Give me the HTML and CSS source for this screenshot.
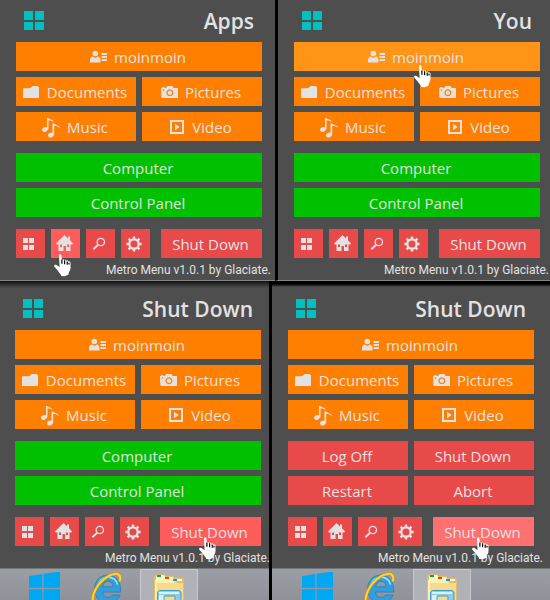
FILE: index.html
```html
<!DOCTYPE html>
<html lang="en">
<head>
<meta charset="UTF-8">
<meta name="viewport" content="width=device-width, initial-scale=1.0">
<title>Metro Menu</title>
<link rel="stylesheet" href="styles.css">
</head>
<body>

<!-- Shared icons -->
<svg class="sprite" aria-hidden="true">
    <symbol id="tiles" viewBox="0 0 20 20">
        <path d="M0 0h9v9H0zM11 0h9v9h-9zM0 11h9v8H0zM11 11h9v8h-9z"/>
    </symbol>
    <symbol id="small-tiles" viewBox="0 0 16 16">
        <path d="M2 2h5v5H2zM8 2h5v5H8zM2 9h5v5H2zM8 9h5v5H8z"/>
    </symbol>
    <symbol id="user" viewBox="0 0 17 18">
        <circle cx="5.300" cy="4.500" r="2.800"/>
        <path d="M0 13.500v-2.500c0-2 1.400-3.300 3-3.500l2.300 1.500 2.300-1.500c1.700.2 2.900 1.500 2.900 3.500v2.500z"/>
        <path d="M11.500 4H17v2h-5.500zM11.500 7H17v2h-5.500zM11.500 10H17v2h-5.500z"/>
    </symbol>
    <symbol id="folder" viewBox="0 0 17 18">
        <path d="M0 4.200h7.200l2.600-2.300h4.900l1.300 1.600v10.600H0z"/>
    </symbol>
    <symbol id="camera" viewBox="0 0 17 18">
        <path fill-rule="evenodd" d="M0 4h1V3h2.500v1H5l1.200-2h5.300l1.200 2H17v10H1.300L.3 13zM8.900 5.300a3.500 3.500 0 1 0 .01 0zM8.900 6.600a2.200 2.200 0 1 1-.01 0zM1.800 5.500v1.300h1.300V5.500z"/>
    </symbol>
    <symbol id="music" viewBox="0 0 18 20">
        <ellipse cx="2.900" cy="11.500" rx="2.900" ry="2.300" transform="rotate(-20 2.900 11.500)"/>
        <path d="M5 0h1.300c.5 1.300 4.700 1.300 5.500 3.700C9.800 2.600 8 2.300 6.500 2.500v8.800H5z"/>
        <ellipse cx="9" cy="17" rx="3" ry="2.400" transform="rotate(-20 9 17)"/>
        <path d="M10.500 5.500H12c.7 1.400 5.300 1.500 6 4.500-2.300-1.800-4.100-2.100-5.800-1.900v9h-1.700z"/>
    </symbol>
    <symbol id="video" viewBox="0 0 15 18">
        <path fill-rule="evenodd" d="M0 1h14v14H0zM2 3v10h10V3zM5 4.800L9.800 8 5 11.200z"/>
    </symbol>
    <symbol id="home" viewBox="0 0 17 17">
        <path fill-rule="evenodd" d="M8.500 0L12 3.400V1.500h2v3.800l3 3.200-.8.900H14.500V16H10v-5H7.500v5H2.500V9.400H.8L0 8.500zM4 9.500V12h2V9.500zM11 9.500V12h2V9.500z"/>
    </symbol>
    <symbol id="search" viewBox="0 0 14 14">
        <g fill="none" stroke="currentColor"><circle cx="8.800" cy="5" r="3.700" stroke-width="1.300"/><path d="M6.200 7.700L1.300 12.200" stroke-width="1.900"/></g>
    </symbol>
    <symbol id="gear" viewBox="0 0 16 16">
        <g fill="none" stroke="currentColor">
            <circle cx="8" cy="8" r="4.700" stroke-width="2.300"/>
            <path d="M8 .4v3M8 12.600v3M.4 8h3M12.600 8h3M2.600 2.600l2.200 2.200M11.200 11.200l2.200 2.200M13.400 2.600l-2.200 2.200M4.800 11.200l-2.200 2.200" stroke-width="2.500"/>
        </g>
    </symbol>
    <symbol id="hand" viewBox="0 0 17 23">
        <path fill="#fff" d="M5 1.400C5 0 7.200 0 7.400 1.400l.5 4.400c.5-.9 2-.7 2.300.3.600-.7 2-.4 2.300.7.700-.5 2-.1 2.200.9.800-.4 1.800.2 1.800 1.200v5.200c0 2.500-1.500 3.500-1.900 5.200v1.300L11 22.300l-3.700-.2c-.5-2.600-2.800-3.900-4-6.100L.4 12.700c-.9-1.300.6-2.600 2-1.700l3.200 2.100z"/>
        <path fill="none" stroke="#000" stroke-width="1.200" d="M7.900 5.500v4.300M10.600 6.200v4.100M13.200 7.400v3.300M15 8.800v1.800"/>
    </symbol>
    <symbol id="windows" viewBox="0 0 33 32">
        <path fill="#00a8f3" d="M0 3.500L13.700 1.500v14.300H0zM15 1.300L32 -1v16.800H15zM0 17.200h13.700v13.300L0 28.500zM15 17.200h17V33l-17-2.300z"/>
    </symbol>
    <symbol id="explorer" viewBox="0 0 32 32">
        <path fill="#2f9fe0" stroke="#1976b8" stroke-width=".6" fill-rule="evenodd" d="M17 3C8.500 3 3.500 9.500 3.500 17.200S9 31 17 31c6 0 10.500-3.200 12-8h-7.500c-1 1.500-2.400 2.300-4.400 2.300-3.300 0-5.300-2-5.500-5.200h18C30.300 10 25.500 3 17 3zM11.700 14.700c.5-3.300 2.500-5.300 5.400-5.300 2.800 0 4.800 2 5.100 5.300z"/>
        <path fill="none" stroke="#a5e4fb" stroke-width="1.500" d="M6.500 14.500C8 8 12 5.200 17 5.200c5 0 8.500 3 9.500 7.500"/>
        <path fill="none" stroke="#d69200" stroke-width="3" d="M28.500 9.500c2-5-.3-8.200-4.800-7.600C14 3.200 3.500 14.500 1.800 26c-.3 2.500 0 4.500 1 5.500"/>
        <path fill="none" stroke="#ffd532" stroke-width="2" d="M28.500 9.500c2-5-.3-8.200-4.800-7.600C14 3.200 3.500 14.500 1.800 26c-.3 2.500 0 4.500 1 5.500"/>
    </symbol>
    <symbol id="files" viewBox="0 0 32 32">
        <path fill="#e5bd62" d="M1 5l1.500-2.500h9L13 4h7l2 2h7.500L31 8v24H1z"/>
        <path fill="#fff7cf" d="M3 5l1-2h7l1 2h8l1 2h8v2H3z"/>
        <path fill="#f6dc88" d="M2 8h20l2 3h6v21H2z"/>
        <path fill="#fff0b2" d="M2 8h18l2 3H4v21H2z"/>
        <path fill="#0fae25" d="M4 3h4v2H4z"/><path fill="#d94a18" d="M12 5h4v2h-4z"/><path fill="#1899e8" d="M20 7h4v2h-4z"/>
        <path fill="#8bcbed" stroke="#4599c5" d="M4.500 32V20l2-1.500h20l1.500 2V32"/>
        <path fill="#d5f1fa" d="M6 20h20v2H6zM6 23h5v9H6z"/>
        <path fill="#f4da86" stroke="#4a9fc7" d="M11 32v-8h11v8"/>
    </symbol>
</svg>

<main class="desktop">
    <div class="row row-top">
        <section class="panel panel-apps">
            <div class="menu">
                <header class="menu-header">
                    <svg class="logo"><use href="#tiles"/></svg>
                    <h2>Apps</h2>
                </header>
                <div class="tiles">
                    <button class="tile wide"><svg class="icon"><use href="#user"/></svg>moinmoin</button>
                    <button class="tile"><svg class="icon"><use href="#folder"/></svg>Documents</button>
                    <button class="tile"><svg class="icon"><use href="#camera"/></svg>Pictures</button>
                    <button class="tile"><svg class="icon icon-music"><use href="#music"/></svg>Music</button>
                    <button class="tile"><svg class="icon icon-video"><use href="#video"/></svg>Video</button>
                </div>
                <div class="tiles">
                    <button class="tile wide green">Computer</button>
                    <button class="tile wide green">Control Panel</button>
                </div>
                <div class="actions">
                    <button class="tile red square" aria-label="Apps"><svg class="icon-small"><use href="#small-tiles"/></svg></button>
                    <button class="tile red square active" aria-label="Home"><svg class="icon-home"><use href="#home"/></svg><svg class="cursor cursor-home"><use href="#hand"/></svg></button>
                    <button class="tile red square" aria-label="Search"><svg class="icon-search"><use href="#search"/></svg></button>
                    <button class="tile red square" aria-label="Settings"><svg class="icon-small"><use href="#gear"/></svg></button>
                    <button class="tile red power">Shut Down</button>
                </div>
                <p class="version">Metro Menu v1.0.1 by Glaciate.</p>
            </div>
        </section>

        <section class="panel panel-you">
            <div class="menu">
                <header class="menu-header">
                    <svg class="logo"><use href="#tiles"/></svg>
                    <h2>You</h2>
                </header>
                <div class="tiles">
                    <button class="tile wide active"><svg class="icon"><use href="#user"/></svg>moinmoin<svg class="cursor cursor-user"><use href="#hand"/></svg></button>
                    <button class="tile"><svg class="icon"><use href="#folder"/></svg>Documents</button>
                    <button class="tile"><svg class="icon"><use href="#camera"/></svg>Pictures</button>
                    <button class="tile"><svg class="icon icon-music"><use href="#music"/></svg>Music</button>
                    <button class="tile"><svg class="icon icon-video"><use href="#video"/></svg>Video</button>
                </div>
                <div class="tiles">
                    <button class="tile wide green">Computer</button>
                    <button class="tile wide green">Control Panel</button>
                </div>
                <div class="actions">
                    <button class="tile red square" aria-label="Apps"><svg class="icon-small"><use href="#small-tiles"/></svg></button>
                    <button class="tile red square" aria-label="Home"><svg class="icon-home"><use href="#home"/></svg></button>
                    <button class="tile red square" aria-label="Search"><svg class="icon-search"><use href="#search"/></svg></button>
                    <button class="tile red square" aria-label="Settings"><svg class="icon-small"><use href="#gear"/></svg></button>
                    <button class="tile red power">Shut Down</button>
                </div>
                <p class="version">Metro Menu v1.0.1 by Glaciate.</p>
            </div>
        </section>
    </div>

    <div class="row row-bottom">
        <section class="panel panel-shutdown">
            <div class="menu">
                <header class="menu-header">
                    <svg class="logo"><use href="#tiles"/></svg>
                    <h2>Shut Down</h2>
                </header>
                <div class="tiles">
                    <button class="tile wide"><svg class="icon"><use href="#user"/></svg>moinmoin</button>
                    <button class="tile"><svg class="icon"><use href="#folder"/></svg>Documents</button>
                    <button class="tile"><svg class="icon"><use href="#camera"/></svg>Pictures</button>
                    <button class="tile"><svg class="icon icon-music"><use href="#music"/></svg>Music</button>
                    <button class="tile"><svg class="icon icon-video"><use href="#video"/></svg>Video</button>
                </div>
                <div class="tiles">
                    <button class="tile wide green">Computer</button>
                    <button class="tile wide green">Control Panel</button>
                </div>
                <div class="actions">
                    <button class="tile red square" aria-label="Apps"><svg class="icon-small"><use href="#small-tiles"/></svg></button>
                    <button class="tile red square" aria-label="Home"><svg class="icon-home"><use href="#home"/></svg></button>
                    <button class="tile red square" aria-label="Search"><svg class="icon-search"><use href="#search"/></svg></button>
                    <button class="tile red square" aria-label="Settings"><svg class="icon-small"><use href="#gear"/></svg></button>
                    <button class="tile red power active">Shut Down<svg class="cursor cursor-power"><use href="#hand"/></svg></button>
                </div>
                <p class="version">Metro Menu v1.0.1 by Glaciate.</p>
            </div>
            <nav class="taskbar">
                <button class="task" aria-label="Start"><svg class="task-icon"><use href="#windows"/></svg></button>
                <button class="task" aria-label="Internet Explorer"><svg class="task-icon"><use href="#explorer"/></svg></button>
                <button class="task task-open" aria-label="File Explorer"><svg class="task-icon"><use href="#files"/></svg></button>
            </nav>
        </section>

        <section class="panel panel-options">
            <div class="menu">
                <header class="menu-header">
                    <svg class="logo"><use href="#tiles"/></svg>
                    <h2>Shut Down</h2>
                </header>
                <div class="tiles">
                    <button class="tile wide"><svg class="icon"><use href="#user"/></svg>moinmoin</button>
                    <button class="tile"><svg class="icon"><use href="#folder"/></svg>Documents</button>
                    <button class="tile"><svg class="icon"><use href="#camera"/></svg>Pictures</button>
                    <button class="tile"><svg class="icon icon-music"><use href="#music"/></svg>Music</button>
                    <button class="tile"><svg class="icon icon-video"><use href="#video"/></svg>Video</button>
                </div>
                <div class="tiles">
                    <button class="tile red">Log Off</button>
                    <button class="tile red">Shut Down</button>
                    <button class="tile red">Restart</button>
                    <button class="tile red">Abort</button>
                </div>
                <div class="actions">
                    <button class="tile red square" aria-label="Apps"><svg class="icon-small"><use href="#small-tiles"/></svg></button>
                    <button class="tile red square" aria-label="Home"><svg class="icon-home"><use href="#home"/></svg></button>
                    <button class="tile red square" aria-label="Search"><svg class="icon-search"><use href="#search"/></svg></button>
                    <button class="tile red square" aria-label="Settings"><svg class="icon-small"><use href="#gear"/></svg></button>
                    <button class="tile red power pressed">Shut Down<svg class="cursor cursor-power"><use href="#hand"/></svg></button>
                </div>
                <p class="version">Metro Menu v1.0.1 by Glaciate.</p>
            </div>
            <nav class="taskbar">
                <button class="task" aria-label="Start"><svg class="task-icon"><use href="#windows"/></svg></button>
                <button class="task" aria-label="Internet Explorer"><svg class="task-icon"><use href="#explorer"/></svg></button>
                <button class="task task-open" aria-label="File Explorer"><svg class="task-icon"><use href="#files"/></svg></button>
            </nav>
        </section>
    </div>
</main>

</body>
</html>
```

FILE: styles.css
```css
* {
    box-sizing: border-box;
}

body {
    margin: 0;
    background-color: #4e4e4e;
    color: #e2e2e2;
    font-family: "Open Sans", "Noto Sans", sans-serif;
}

.sprite {
    display: none;
}

/* Panels */
.row {
    display: grid;
}

.row-top {
    grid-template-columns: 1fr 1fr;
}

.row-bottom {
    grid-template-columns: 269fr 281fr;
}

.panel {
    min-width: 0;
}

.row-top .panel {
    border-bottom: 1px solid #858585;
}

.row-top .panel-you {
    border-left: 3px solid #000;
}

.row-bottom .panel {
    background-image: linear-gradient(#101010, #4e4e4e 7px);
}

.row-bottom .panel-options {
    border-left: 3px solid #000;
    background-image: linear-gradient(#000 3px, #4e4e4e 6px);
}

.panel-apps .menu {
    padding: 0 13px 0 16px;
}

.panel-you .menu {
    padding: 0 10px 0 16px;
}

.row-bottom .menu {
    padding-top: 7px;
}

.panel-shutdown .menu {
    padding-left: 15px;
    padding-right: 8px;
}

.panel-options .menu {
    padding-left: 16px;
    padding-right: 16px;
}

.menu-header {
    display: flex;
    justify-content: space-between;
    align-items: center;
    height: 42px;
    padding: 0 8px;
}

.logo {
    width: 20px;
    height: 20px;
    fill: #00c0c0;
}

h2 {
    margin: 0;
    font-size: 21px;
    line-height: 42px;
    font-weight: 600;
}

/* Tiles */
.tiles {
    display: grid;
    grid-template-columns: 1fr 1fr;
    gap: 6px;
    margin-bottom: 12px;
}

.tile {
    position: relative;
    display: flex;
    justify-content: center;
    align-items: center;
    gap: 7px;
    height: 29px;
    padding: 2px 2px 0 0;
    border: none;
    background-color: #ff8000;
    color: #e2e2e2;
    font-family: inherit;
    font-size: 15px;
    line-height: 27px;
    white-space: nowrap;
    cursor: pointer;
}

.tile.active {
    background-color: #ff9416;
}

.wide {
    grid-column: span 2;
}

.green {
    background-color: #00c000;
}

.red {
    background-color: #e84a4a;
}

.red.active {
    background-color: #ff5c5c;
}

.red.pressed {
    background-color: #ff7070;
}

.tile svg {
    flex: none;
    fill: currentColor;
}

.icon {
    width: 17px;
    height: 18px;
}

.icon-music {
    width: 18px;
    height: 20px;
}

.icon-video {
    width: 15px;
}

.actions {
    display: flex;
    gap: 6px;
}

.square {
    width: 29px;
    padding: 0 3px 0 0;
}

.power {
    flex: 1;
    margin-left: 5px;
}

.icon-small {
    width: 16px;
    height: 16px;
}

.icon-home {
    width: 17px;
    height: 17px;
}

.icon-search {
    width: 14px;
    height: 14px;
}

.version {
    margin: 0 -9px 0 0;
    padding-top: 2px;
    font-family: Roboto, "Open Sans", sans-serif;
    font-size: 12px;
    line-height: 20px;
    text-align: right;
    white-space: nowrap;
}

/* Mouse pointer */
.cursor {
    position: absolute;
    z-index: 1;
    width: 17px;
    height: 23px;
}

.cursor-home {
    left: 3px;
    top: 25px;
}

.cursor-user {
    left: calc(50% - 3px);
    top: 23px;
}

.cursor-power {
    left: 39px;
    top: 20px;
}

/* Taskbar */
.taskbar {
    display: flex;
    height: 32px;
    padding-left: 16px;
    overflow: hidden;
    border-top: 1px solid #747579;
    background: linear-gradient(#9c9ea5, #909299);
}

.panel-options .taskbar {
    padding-left: 17px;
}

.task {
    display: flex;
    justify-content: center;
    width: 58px;
    height: 40px;
    margin-right: 4px;
    padding: 2px 0 0;
    border: 1px solid transparent;
    background: none;
}

.task-open {
    border-color: #c8c9cd;
    background-color: #b0b2b7;
}

.task-icon {
    width: 32px;
    height: 32px;
}
```
